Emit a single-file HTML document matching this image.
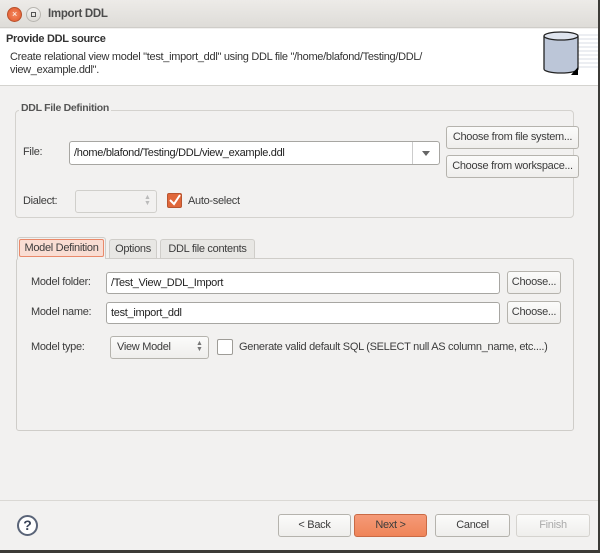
<!DOCTYPE html>
<html><head><style>
*{box-sizing:border-box;margin:0;padding:0}
body{width:600px;height:553px;background:#3c3b37;font-family:"Liberation Sans",sans-serif;font-size:11px;letter-spacing:-0.3px;color:#3c3c3c;position:relative;overflow:hidden;white-space:nowrap}
.a{position:absolute}
.win{left:0;top:0;width:598px;height:550px;background:#f2f1f0}
.btn{position:absolute;border:1px solid #b5b3ad;border-radius:3px;background:linear-gradient(#fbfbfa,#efeeec);text-align:center;font-size:11px;color:#3c3c3c}
.inp{position:absolute;border:1px solid #a7a6a2;border-radius:3px;background:#fff;padding-left:4px;font-size:11px;color:#222}
.lbl{position:absolute;font-size:11px;color:#3c3c3c}
</style></head><body>
<div class="a win"></div>
<div class="a" style="left:0;top:0;width:598px;height:28px;background:linear-gradient(#edebe8,#dedcd8);border-bottom:1px solid #cfcdc9"></div>
<div class="a" style="left:7px;top:7px;width:15px;height:15px;border-radius:50%;background:radial-gradient(#f58a60,#e0562a);border:1px solid #b8512c;color:#fff;font-size:9px;text-align:center;line-height:13px">×</div>
<div class="a" style="left:26px;top:7px;width:15px;height:15px;border-radius:50%;background:linear-gradient(#f4f3f1,#dddbd7);border:1px solid #b7b5b0;"><div class="a" style="left:4px;top:4px;width:5px;height:5px;border:1px solid #555"></div></div>
<div class="a" style="left:48px;top:8px;font-weight:bold;font-size:11.5px;color:#4c4c4c">Import DDL</div>
<div class="a" style="left:0;top:29px;width:598px;height:57px;background:#fff;border-bottom:1px solid #d4d3cf"></div>
<div class="a" style="left:6px;top:33px;font-weight:bold;font-size:11px;color:#333">Provide DDL source</div>
<div class="a" style="left:10px;top:51px;font-size:11px;color:#333;line-height:13px">Create relational view model "test_import_ddl" using DDL file "/home/blafond/Testing/DDL/<br>view_example.ddl".</div>
<svg class="a" style="left:540px;top:29px" width="58" height="50">
<g stroke="#d9dde6" stroke-width="1"><line x1="20" y1="6" x2="58" y2="6"/><line x1="20" y1="10" x2="58" y2="10"/><line x1="20" y1="14" x2="58" y2="14"/><line x1="20" y1="18" x2="58" y2="18"/><line x1="20" y1="22" x2="58" y2="22"/><line x1="20" y1="26" x2="58" y2="26"/><line x1="20" y1="30" x2="58" y2="30"/><line x1="20" y1="34" x2="58" y2="34"/><line x1="20" y1="38" x2="58" y2="38"/></g>
<path d="M4 7 V40 A17 4 0 0 0 38 40 V7" fill="#bcc6d8" stroke="#222" stroke-width="1.3"/>
<ellipse cx="21" cy="7" rx="17" ry="4" fill="#dfe4ee" stroke="#222" stroke-width="1.3"/>
<path d="M31 46 L38 38 V46Z" fill="#000"/>
</svg>
<div class="a" style="left:15px;top:110px;width:559px;height:108px;border:1px solid #d4d2ce;border-radius:4px"></div>
<div class="a" style="left:19px;top:102px;background:#f2f1f0;padding:0 2px;font-weight:bold;font-size:10.5px;color:#555">DDL File Definition</div>
<div class="lbl" style="left:23px;top:146px">File:</div>
<div class="inp" style="left:69px;top:141px;width:371px;height:24px;line-height:22px">/home/blafond/Testing/DDL/view_example.ddl</div>
<div class="a" style="left:412px;top:142px;width:1px;height:22px;background:#ccc"></div>
<div class="a" style="left:422px;top:151px;border-left:4px solid transparent;border-right:4px solid transparent;border-top:5px solid #666"></div>
<div class="btn" style="left:446px;top:126px;width:133px;height:23px;line-height:21px">Choose from file system...</div>
<div class="btn" style="left:446px;top:155px;width:133px;height:23px;line-height:21px">Choose from workspace...</div>
<div class="lbl" style="left:23px;top:195px">Dialect:</div>
<div class="a" style="left:75px;top:190px;width:82px;height:23px;border:1px solid #d0cfcb;border-radius:3px;background:#f2f1f0"></div>
<div class="a" style="left:144px;top:195px;color:#bbb;font-size:7px;line-height:6px">▲<br>▼</div>
<div class="a" style="left:167px;top:193px;width:15px;height:15px;border-radius:2px;background:#e0673a;border:1px solid #b85530"></div>
<svg class="a" style="left:168px;top:193px" width="14" height="14"><path d="M2 7 L6 11 L12 2" stroke="#fff" stroke-width="2" fill="none"/></svg>
<div class="lbl" style="left:188px;top:195px">Auto-select</div>
<div class="a" style="left:16px;top:258px;width:558px;height:173px;border:1px solid #cfcdc9;border-radius:3px"></div>
<div class="a" style="left:17px;top:237px;width:89px;height:22px;border:1px solid #cfcdc9;border-bottom:none;background:#f2f1f0;border-radius:3px 3px 0 0"></div>
<div class="a" style="left:19px;top:239px;width:85px;height:18px;border:1px solid #e9896a;border-radius:2px;background:#f9ddd3;text-align:center;line-height:16px">Model Definition</div>
<div class="a" style="left:109px;top:239px;width:48px;height:19px;border:1px solid #cfcdc9;border-bottom:none;background:#e8e7e4;border-radius:3px 3px 0 0;text-align:center;line-height:19px">Options</div>
<div class="a" style="left:160px;top:239px;width:95px;height:19px;border:1px solid #cfcdc9;border-bottom:none;background:#e8e7e4;border-radius:3px 3px 0 0;text-align:center;line-height:19px">DDL file contents</div>
<div class="lbl" style="left:31px;top:276px">Model folder:</div>
<div class="inp" style="left:106px;top:272px;width:394px;height:22px;line-height:20px">/Test_View_DDL_Import</div>
<div class="btn" style="left:507px;top:271px;width:54px;height:23px;line-height:21px">Choose...</div>
<div class="lbl" style="left:31px;top:306px">Model name:</div>
<div class="inp" style="left:106px;top:302px;width:394px;height:22px;line-height:20px">test_import_ddl</div>
<div class="btn" style="left:507px;top:301px;width:54px;height:23px;line-height:21px">Choose...</div>
<div class="lbl" style="left:31px;top:341px">Model type:</div>
<div class="btn" style="left:110px;top:336px;width:99px;height:23px;line-height:21px;text-align:left;padding-left:6px">View Model</div>
<div class="a" style="left:196px;top:341px;color:#777;font-size:7px;line-height:6px">▲<br>▼</div>
<div class="a" style="left:217px;top:339px;width:16px;height:16px;border:1px solid #9e9c97;border-radius:2px;background:#fff"></div>
<div class="lbl" style="left:239px;top:341px">Generate valid default SQL (SELECT null AS column_name, etc....)</div>
<div class="a" style="left:0;top:500px;width:598px;height:1px;background:#dad8d4"></div>
<div class="a" style="left:17px;top:515px;width:21px;height:21px;border-radius:50%;border:2px solid #5a6478;background:#fff;text-align:center;font-weight:bold;font-size:14px;line-height:17px;color:#3a4458;letter-spacing:0">?</div>
<div class="btn" style="left:278px;top:514px;width:73px;height:23px;line-height:21px">&lt; Back</div>
<div class="btn" style="left:354px;top:514px;width:73px;height:23px;line-height:21px;background:linear-gradient(#f59a78,#ef8458);border-color:#c96a45;color:#3c3c3c">Next &gt;</div>
<div class="btn" style="left:435px;top:514px;width:75px;height:23px;line-height:21px">Cancel</div>
<div class="btn" style="left:516px;top:514px;width:74px;height:23px;line-height:21px;color:#aaa;border-color:#d5d3cf">Finish</div>
</body></html>
